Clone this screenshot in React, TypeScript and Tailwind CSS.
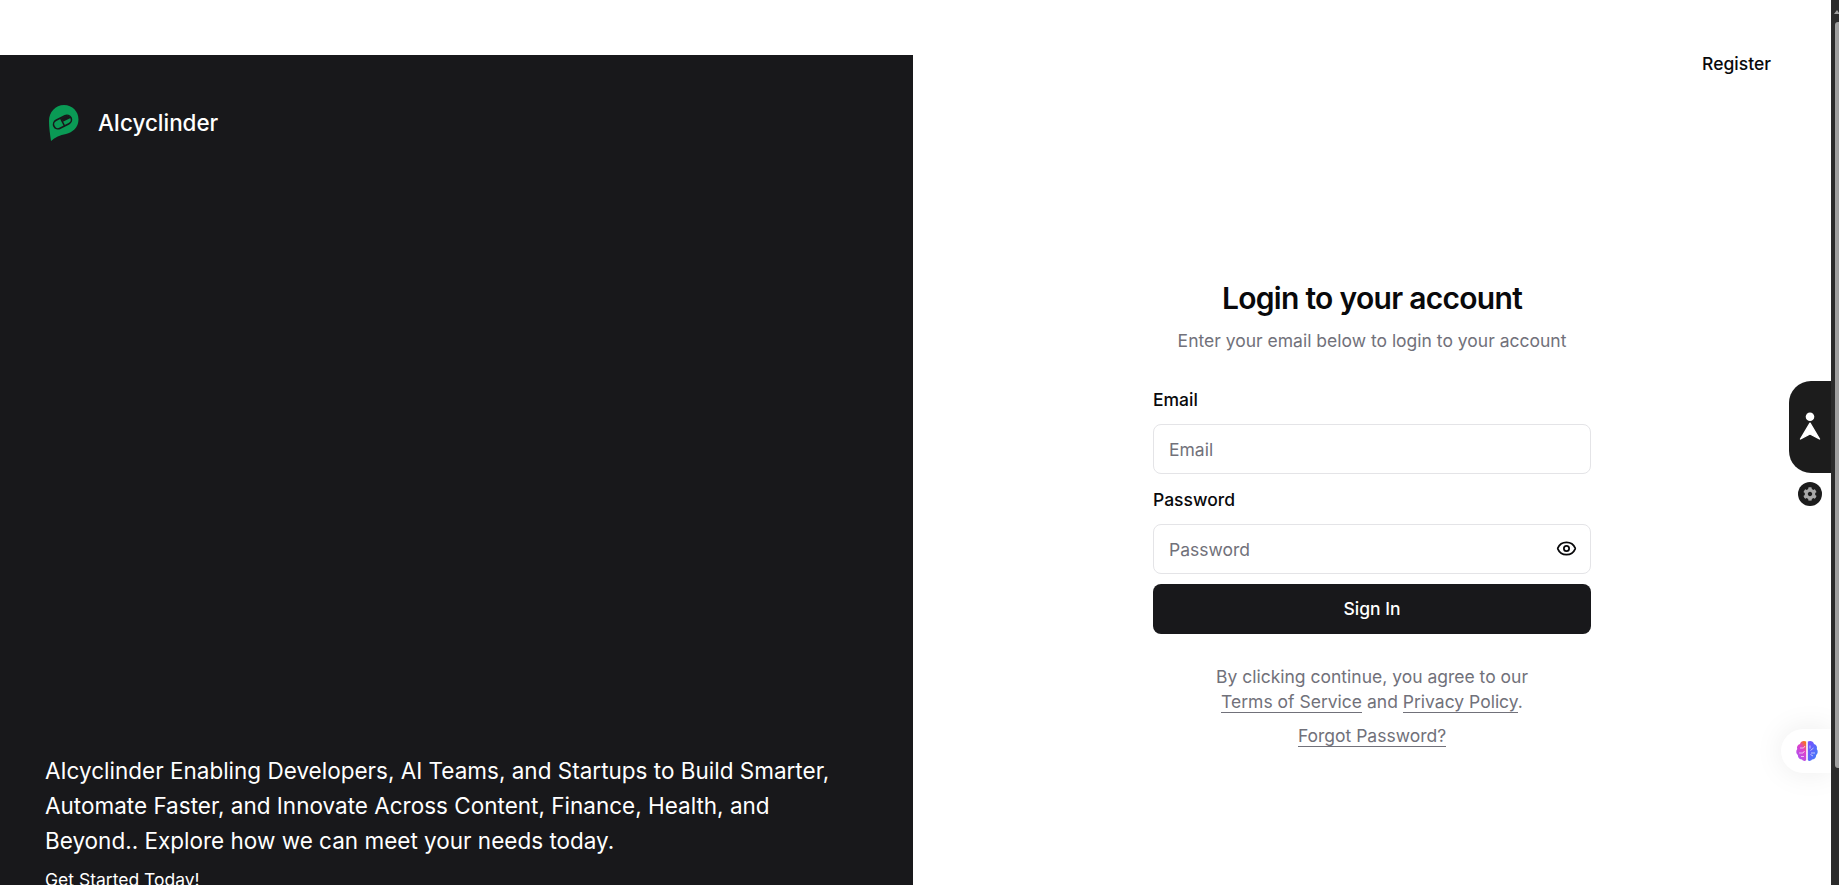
import React from 'react';
import { Eye } from 'lucide-react';
import { FaCog } from 'react-icons/fa';

const Logo = () => (
  <svg width="30" height="36" viewBox="0 0 30 36" className="shrink-0">
    <path d="M15 0C23.500 0 29.500 6.500 29.500 14.500C29.500 22.500 23.500 27.500 17 29C11 30.300 6 32 2 36C1 29 0 23 0 16C0 7 6.500 0 15 0Z" fill="#0a9a55" />
    <g transform="rotate(-27 13.500 17)" fill="none" stroke="#18181b" strokeWidth="1.600">
      <rect x="4" y="12.500" width="19" height="9" rx="4.500" />
      <path d="M13.500 12.500V21.500" />
      <path d="M14 13H19C21.500 13 22.500 15 22.500 17H14Z" fill="#18181b" stroke="none" />
    </g>
  </svg>
);

const Brain = () => (
  <svg width="24" height="24" viewBox="0 0 24 24">
    <defs>
      <linearGradient id="brainLeft" x1="0.800" y1="0" x2="0.200" y2="1">
        <stop offset="0" stopColor="#f97316" />
        <stop offset="0.350" stopColor="#e040c8" />
        <stop offset="1" stopColor="#a855f7" />
      </linearGradient>
      <linearGradient id="brainRight" x1="0" y1="0" x2="1" y2="1">
        <stop offset="0" stopColor="#7c4dff" />
        <stop offset="1" stopColor="#3b82f6" />
      </linearGradient>
    </defs>
    <path d="M11.200 2.500C8.500 1 5.500 2.500 5 5C2.500 5.500 1.500 8 2.200 10C.8 12 1 14.500 2.800 16C2.800 19 5 20.500 7 20.500C8.500 22.500 10.500 22 11.200 21Z" fill="url(#brainLeft)" />
    <path d="M12.800 2.500C15.500 1 18.500 2.500 19 5C21.500 5.500 22.500 8 21.800 10C23.200 12 23 14.500 21.200 16C21.200 19 19 20.500 17 20.500C15.500 22.500 13.500 22 12.800 21Z" fill="url(#brainRight)" />
    <path d="M5 9H8.500L10 7M4 14H8L9.500 12M6 17.500H9M15 6.500V9.500M18.500 9L15.500 11.500M20 14H16M18 17L15.500 15.500" fill="none" stroke="#fff" strokeOpacity="0.700" strokeWidth="0.900" />
  </svg>
);

const Person = () => (
  <svg width="24" height="34" viewBox="0 0 24 34">
    <circle cx="12" cy="6.700" r="4.300" fill="#fff" />
    <path d="M12 13.200L21.500 29L12 24L2.500 29Z" fill="#fff" stroke="#fff" strokeWidth="1.400" strokeLinejoin="round" />
  </svg>
);

const inputClass =
  'h-[50px] w-full rounded-lg border border-[#e4e4e7] bg-white px-[15px] text-[17.500px] text-[#09090b] outline-none placeholder:text-[#71717a]';

export default function App() {
  return (
    <div className="relative h-[885px] w-full overflow-hidden bg-white font-['Inter',sans-serif]">
      <div className="h-[55px]" />
      <div className="grid h-[885px] grid-cols-[913px_918px] pr-2">
        <div className="flex flex-col justify-between bg-[#18181b] pb-[48px] pl-[45px] pr-[60px] pt-[50px] text-white">
          <div className="flex items-center gap-[19px] pl-[4px]">
            <Logo />
            <span className="text-[22.400px] font-medium leading-8">AIcyclinder</span>
          </div>
          <div>
            <p className="text-[22.500px] leading-[35px]">
              AIcyclinder Enabling Developers, AI Teams, and Startups to Build Smarter, Automate Faster, and Innovate
              Across Content, Finance, Health, and Beyond.. Explore how we can meet your needs today.
            </p>
            <p className="mt-[10px] text-[17.500px] leading-6">Get Started Today!</p>
          </div>
        </div>

        <div className="flex flex-col">
          <div className="flex justify-end pr-[60px]">
            <a className="text-[17.500px] font-medium leading-[17px] text-[#09090b]">Register</a>
          </div>
          <div className="flex justify-center pt-[206px]">
            <div className="flex w-[438px] flex-col">
              <h1 className="text-center text-[30px] font-semibold leading-10 tracking-[-0.700px] text-[#09090b]">
                Login to your account
              </h1>
              <p className="mt-[11px] text-center text-[17.500px] leading-6 text-[#71717a]">
                Enter your email below to login to your account
              </p>
              <label className="mt-[35px] text-[17.500px] font-medium leading-[24px] text-[#09090b]">Email</label>
              <input className={`mt-[12px] ${inputClass}`} placeholder="Email" />
              <label className="mt-[14px] text-[17.500px] font-medium leading-[24px] text-[#09090b]">Password</label>
              <div className="relative mt-[12px]">
                <input className={inputClass} placeholder="Password" />
                <Eye className="absolute right-[14px] top-[14px] text-[#09090b]" size={21} strokeWidth={2} />
              </div>
              <button className="mt-[10px] h-[50px] w-full rounded-lg bg-[#18181b] text-[17.500px] font-medium text-white">
                Sign In
              </button>
              <p className="mt-[30px] text-center text-[17.500px] leading-[25px] text-[#71717a]">
                By clicking continue, you agree to our
                <br />
                <a className="border-b border-[#71717a]">Terms of Service</a> and{' '}
                <a className="border-b border-[#71717a]">Privacy Policy</a>.
              </p>
              <div className="mt-[10px] text-center text-[17.500px] leading-6 text-[#71717a]">
                <a className="border-b border-[#71717a]">Forgot Password?</a>
              </div>
            </div>
          </div>
        </div>
      </div>

      {/* accessibility tab and settings */}
      <div className="absolute right-2 top-[381px] flex h-[92px] w-[42px] items-center justify-center rounded-l-[22px] bg-[#1c1c1c]">
        <Person />
      </div>
      <div className="absolute right-[17px] top-[482px] flex h-6 w-6 items-center justify-center rounded-full bg-[#1c1c1c] text-[#a8a8a8]">
        <FaCog size={14} />
      </div>

      {/* brain widget */}
      <div className="absolute right-2 top-[729px] flex h-[44px] w-[50px] items-center rounded-l-[22px] bg-white pl-[14px] shadow-[0_0_30px_rgba(0,0,0,0.080)]">
        <Brain />
      </div>

      {/* browser scrollbar */}
      <div className="absolute bottom-0 right-0 top-0 w-2 bg-[#2b2b2b]">
        <div className="absolute left-1 right-0 top-[22px] h-[746px] rounded-tl-[3px] rounded-bl-[3px] bg-[#9f9f9f]" />
        <div className="absolute left-[3px] top-[10px] h-0 w-0 border-x-[3px] border-b-[4px] border-x-transparent border-b-[#a0a0a0]" />
      </div>
    </div>
  );
}
